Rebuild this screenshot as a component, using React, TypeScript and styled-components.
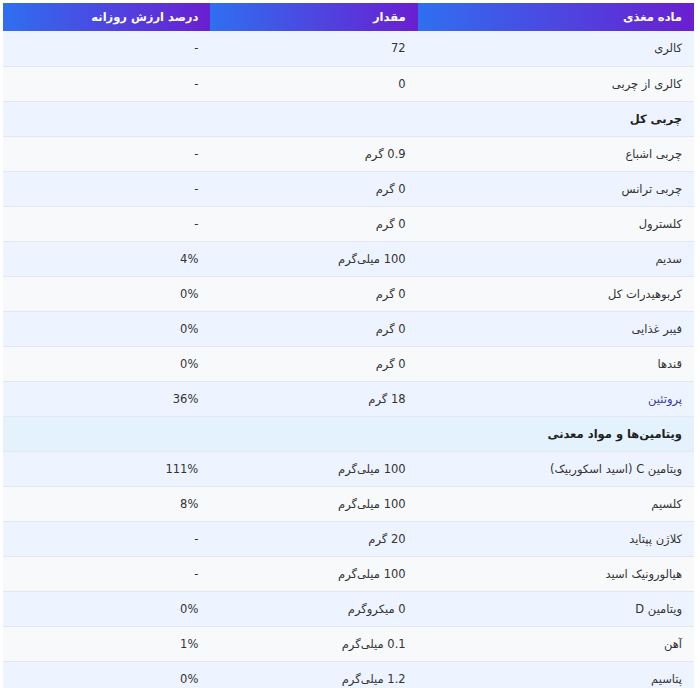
import React from 'react';
import styled, { createGlobalStyle } from 'styled-components';

const Global = createGlobalStyle`
  body { margin: 0; background: #fff; font-family: "DejaVu Sans", "Noto Sans", sans-serif; }
`;

const Wrap = styled.div`
  padding: 3px 6px 0 3px;
  direction: rtl;
`;

const Table = styled.table`
  width: 100%;
  border-collapse: collapse;
  font-size: 11.5px;
  color: #333;
`;

const Th = styled.th`
  background: linear-gradient(to left, #6a1fd0, #2f6ff0);
  color: #fff;
  font-weight: bold;
  text-align: right;
  height: 28px;
  padding: 0 12px;
  width: ${(p: { w: string }) => p.w};
`;

const Tr = styled.tr<{ section?: 'plain' | 'vit' }>`
  height: 35px;
  background: ${(p) => (p.section === 'vit' ? '#e3f2fd' : '#f8f9fb')};
  &:nth-child(odd) {
    background: ${(p) => (p.section === 'vit' ? '#e3f2fd' : '#eef4ff')};
  }
  border-bottom: 1px solid #e4e7ec;
`;

const Td = styled.td<{ link?: boolean }>`
  padding: 0 12px;
  text-align: right;
  color: ${(p) => (p.link ? '#3338a8' : '#333')};
`;

const SectionTd = styled.td`
  padding: 0 12px;
  text-align: right;
  font-weight: bold;
  color: #222;
`;

type Row = [string, string, string] | { section: string; vit?: boolean };

const rows: Row[] = [
  ['کالری', '72', '-'],
  ['کالری از چربی', '0', '-'],
  { section: 'چربی کل' },
  ['چربی اشباع', '0.9 گرم', '-'],
  ['چربی ترانس', '0 گرم', '-'],
  ['کلسترول', '0 گرم', '-'],
  ['سدیم', '100 میلی‌گرم', '4%'],
  ['کربوهیدرات کل', '0 گرم', '0%'],
  ['فیبر غذایی', '0 گرم', '0%'],
  ['قندها', '0 گرم', '0%'],
  ['پروتئین', '18 گرم', '36%'],
  { section: 'ویتامین‌ها و مواد معدنی', vit: true },
  ['ویتامین C (اسید اسکوربیک)', '100 میلی‌گرم', '111%'],
  ['کلسیم', '100 میلی‌گرم', '8%'],
  ['کلاژن پپتاید', '20 گرم', '-'],
  ['هیالورونیک اسید', '100 میلی‌گرم', '-'],
  ['ویتامین D', '0 میکروگرم', '0%'],
  ['آهن', '0.1 میلی‌گرم', '1%'],
  ['پتاسیم', '1.2 میلی‌گرم', '0%'],
];

export default function App() {
  return (
    <Wrap>
      <Global />
      <Table>
        <thead>
          <tr>
            <Th w="40%">ماده مغذی</Th>
            <Th w="30%">مقدار</Th>
            <Th w="30%">درصد ارزش روزانه</Th>
          </tr>
        </thead>
        <tbody>
          {rows.map((r, i) =>
            Array.isArray(r) ? (
              <Tr key={i}>
                <Td link={r[0] === 'پروتئین'}>{r[0]}</Td>
                <Td>{r[1]}</Td>
                <Td>{r[2]}</Td>
              </Tr>
            ) : (
              <Tr key={i} section={r.vit ? 'vit' : 'plain'}>
                <SectionTd colSpan={3}>{r.section}</SectionTd>
              </Tr>
            )
          )}
        </tbody>
      </Table>
    </Wrap>
  );
}
